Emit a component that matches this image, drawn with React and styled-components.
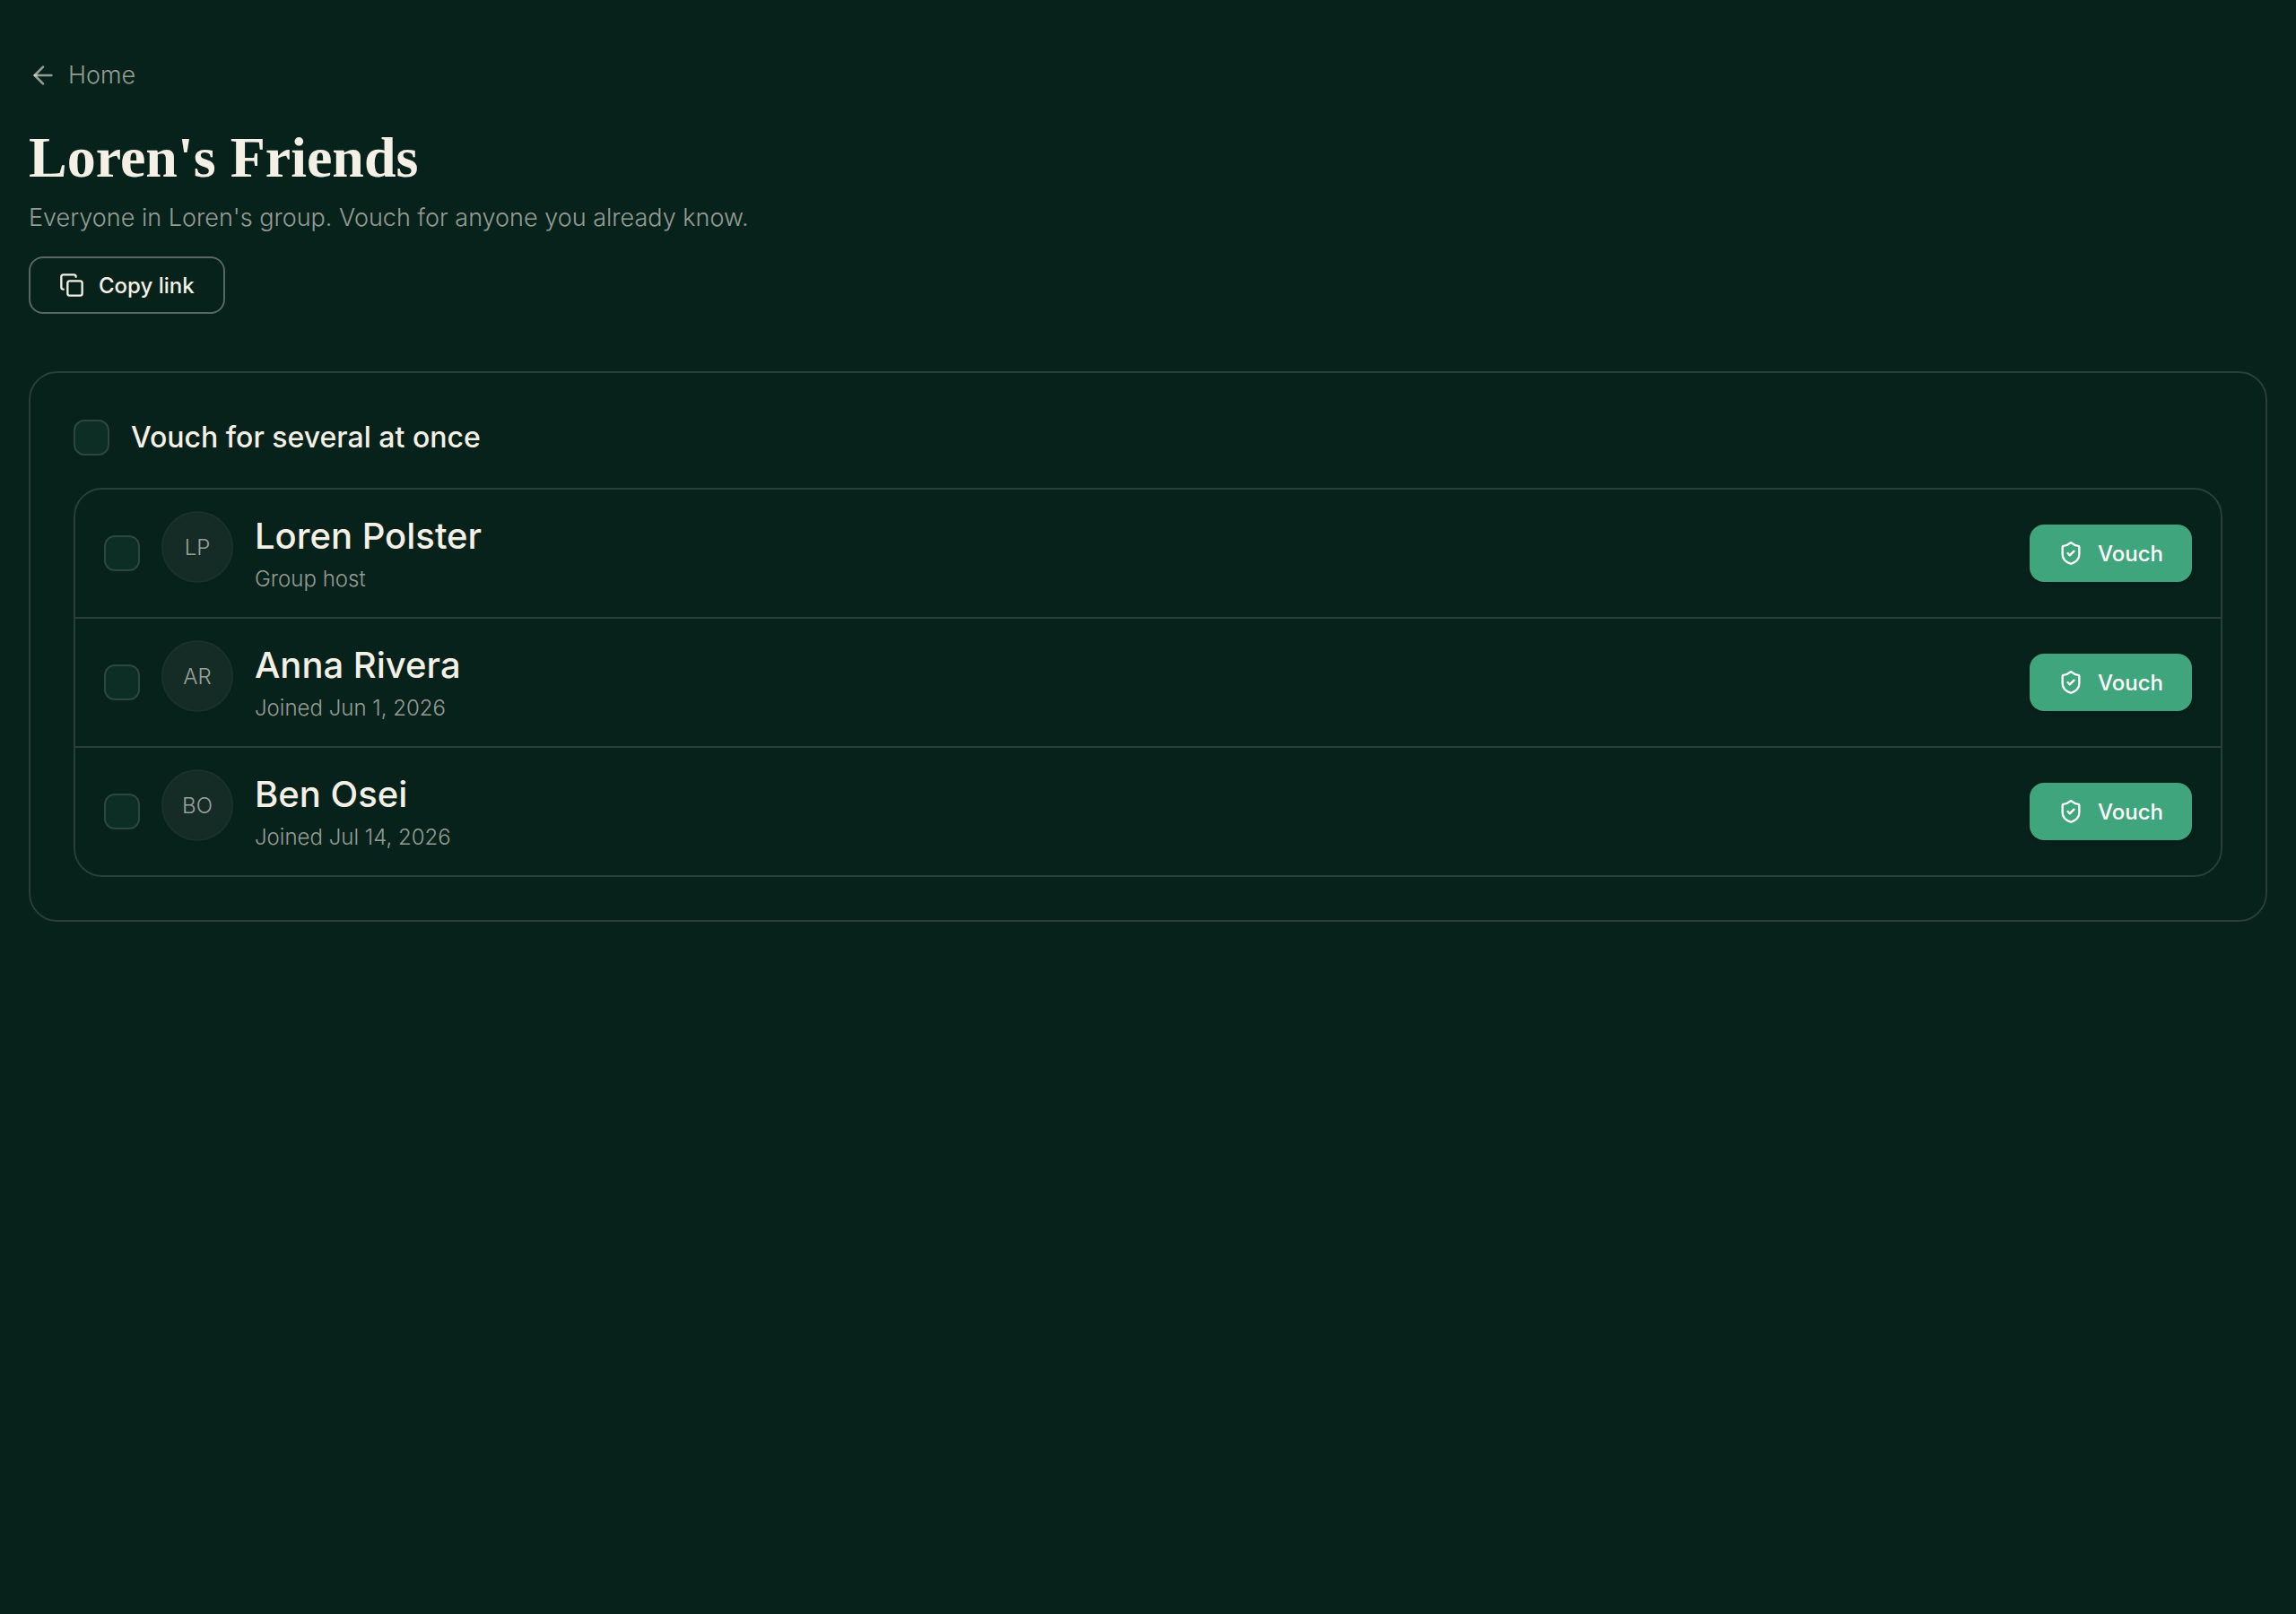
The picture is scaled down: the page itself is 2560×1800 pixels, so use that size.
import React, {useState} from "react";
import styled, {createGlobalStyle} from "styled-components";
import {ArrowLeft, Copy, ShieldCheck} from "lucide-react";

const COLORS = {
    background: "#07221b",
    cream: "#f5f0e6",
    muted: "rgba(245, 240, 230, 0.6)",
    line: "#293e37",
    outline: "#56685f",
    field: "#0c2e25",
    fieldLine: "#2b473e",
    avatar: "#152c26",
    avatarLine: "#1a302a",
    green: "#3fa57c",
};

const GlobalStyle = createGlobalStyle`
  * {
    box-sizing: border-box;
  }

  body {
    margin: 0;
    background: ${COLORS.background};
    color: ${COLORS.cream};
    font-family: Inter, "Liberation Sans", sans-serif;
    font-size: 27px;
    font-weight: 300;
    -webkit-font-smoothing: antialiased;
  }
`;

const Page = styled.main`
  padding: 64px 32px;
`;

const BackLink = styled.a`
  display: flex;
  align-items: center;
  gap: 12px;
  width: fit-content;
  color: ${COLORS.muted};
  line-height: 40px;
  text-decoration: none;
`;

const Header = styled.header`
  margin: 32px 0 64px;
`;

const Title = styled.h1`
  margin: 0;
  font-family: "Liberation Serif", serif;
  font-size: 64px;
  font-weight: 700;
  line-height: 80px;
`;

const Subtitle = styled.p`
  margin: 6px 0 22px;
  color: ${COLORS.muted};
  line-height: 42px;
`;

const Button = styled.button`
  display: flex;
  align-items: center;
  justify-content: center;
  gap: 16px;
  height: 64px;
  padding: 0 32px;
  border: ${({$outline}) => ($outline ? `2px solid ${COLORS.outline}` : "none")};
  border-radius: 16px;
  background: ${({$outline}) => ($outline ? "transparent" : COLORS.green)};
  box-shadow: ${({$outline}) => ($outline ? "none" : "0 2px 4px rgba(0, 0, 0, 0.15)")};
  color: ${({$outline}) => ($outline ? COLORS.cream : "#ffffff")};
  font-family: inherit;
  font-size: 24px;
  font-weight: 500;
  cursor: pointer;
`;

const Card = styled.section`
  padding: 48px;
  border: 2px solid ${COLORS.line};
  border-radius: 32px;
`;

const SelectAll = styled.div`
  display: flex;
  align-items: center;
  gap: 24px;
  margin-bottom: 32px;
  font-size: 32px;
  font-weight: 500;
  line-height: 48px;
`;

const Checkbox = styled.input`
  flex: none;
  appearance: none;
  width: 40px;
  height: 40px;
  margin: 0;
  border: 2px solid ${COLORS.fieldLine};
  border-radius: 12px;
  background: ${COLORS.field};
  cursor: pointer;

  &:checked {
    background: ${COLORS.green};
  }
`;

const MemberList = styled.ul`
  margin: 0;
  padding: 0;
  border: 2px solid ${COLORS.line};
  border-radius: 32px;
  list-style: none;
`;

const MemberRow = styled.li`
  display: flex;
  align-items: center;
  gap: 24px;
  padding: 24px 32px;

  & + & {
    border-top: 2px solid ${COLORS.line};
  }
`;

const Avatar = styled.div`
  display: flex;
  flex: none;
  align-items: center;
  align-self: flex-start;
  justify-content: center;
  width: 80px;
  height: 80px;
  border: 2px solid ${COLORS.avatarLine};
  border-radius: 50%;
  background: ${COLORS.avatar};
  color: ${COLORS.muted};
  font-size: 24px;
`;

const MemberInfo = styled.div`
  flex: 1;
  min-width: 0;
`;

const MemberName = styled.label`
  display: block;
  font-size: 40px;
  font-weight: 500;
  line-height: 56px;
`;

const MemberNote = styled.div`
  margin-top: 2px;
  color: ${COLORS.muted};
  font-size: 24px;
  line-height: 36px;
`;

const members = [
    {id: "loren", initials: "LP", name: "Loren Polster", note: "Group host"},
    {id: "anna", initials: "AR", name: "Anna Rivera", note: "Joined Jun 1, 2026"},
    {id: "ben", initials: "BO", name: "Ben Osei", note: "Joined Jul 14, 2026"},
];

const App = () => {
    const [selected, setSelected] = useState([]);
    const allSelected = selected.length === members.length;

    const toggleAll = () => {
        setSelected(allSelected ? [] : members.map((member) => member.id));
    };

    const toggle = (id) => {
        setSelected((ids) => (ids.includes(id) ? ids.filter((item) => item !== id) : [...ids, id]));
    };

    return (
        <Page>
            <GlobalStyle/>
            <BackLink href="#home">
                <ArrowLeft size={32}/>
                Home
            </BackLink>
            <Header>
                <Title>Loren's Friends</Title>
                <Subtitle>Everyone in Loren's group. Vouch for anyone you already know.</Subtitle>
                <Button type="button" $outline>
                    <Copy size={28}/>
                    Copy link
                </Button>
            </Header>
            <Card>
                <SelectAll>
                    <Checkbox type="checkbox" id="all" checked={allSelected} onChange={toggleAll}/>
                    <label htmlFor="all">Vouch for several at once</label>
                </SelectAll>
                <MemberList>
                    {members.map((member) => (
                        <MemberRow key={member.id}>
                            <Checkbox
                                type="checkbox"
                                id={member.id}
                                checked={selected.includes(member.id)}
                                onChange={() => toggle(member.id)}
                            />
                            <Avatar>{member.initials}</Avatar>
                            <MemberInfo>
                                <MemberName htmlFor={member.id}>{member.name}</MemberName>
                                <MemberNote>{member.note}</MemberNote>
                            </MemberInfo>
                            <Button type="button">
                                <ShieldCheck size={28}/>
                                Vouch
                            </Button>
                        </MemberRow>
                    ))}
                </MemberList>
            </Card>
        </Page>
    );
};

export default App;
